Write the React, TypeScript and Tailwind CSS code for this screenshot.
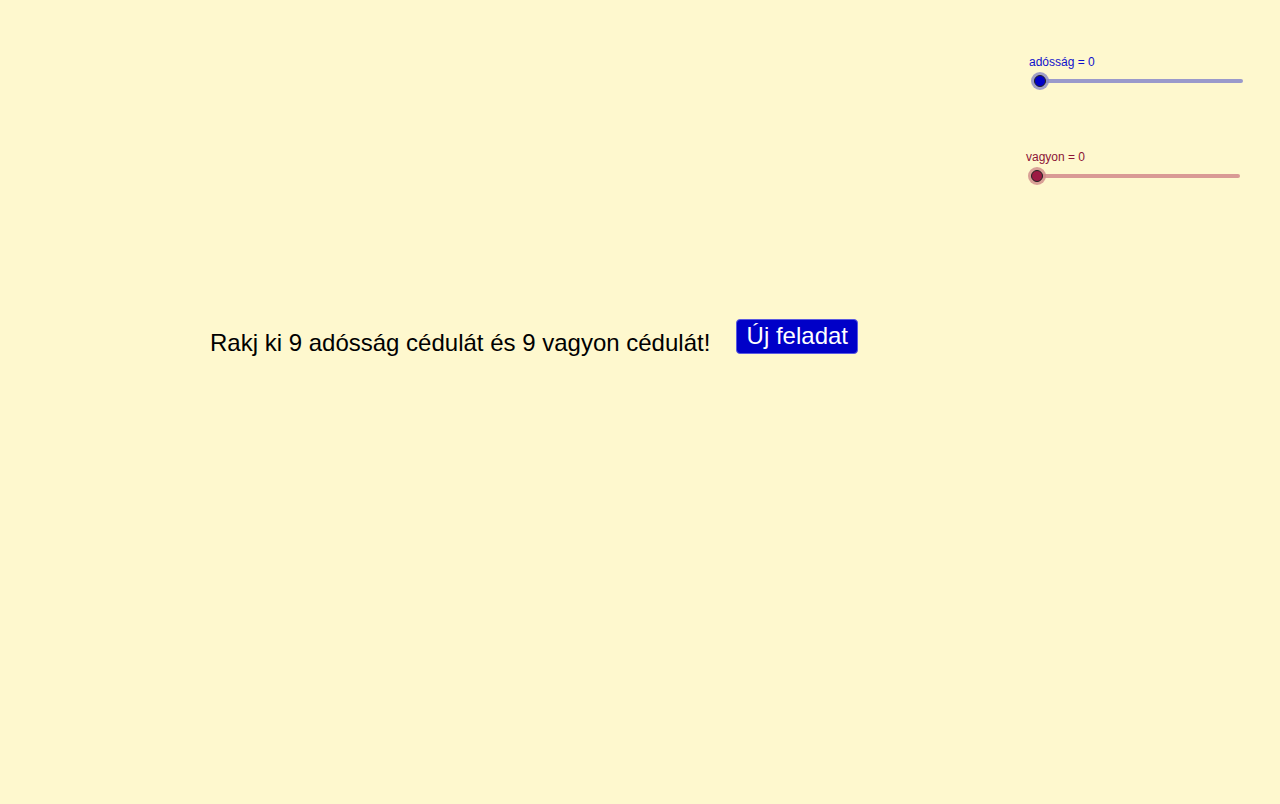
function Slider({
  label,
  labelClass,
  trackClass,
  haloClass,
  knobClass,
}: {
  label: string;
  labelClass: string;
  trackClass: string;
  haloClass: string;
  knobClass: string;
}) {
  return (
    <div className="flex flex-col">
      <span className={`-ml-[2px] mt-[1px] text-[12px] leading-[14px] ${labelClass}`}>{label}</span>
      <div className="relative mt-[3px] h-[18px] w-[221px]">
        <div className={`absolute left-[9px] top-[7px] h-[4px] w-[203px] rounded-full ${trackClass}`} />
        <div className={`absolute left-0 top-0 size-[18px] rounded-full ${haloClass}`} />
        <div className={`absolute left-[3px] top-[3px] size-[12px] rounded-full border border-[#222] ${knobClass}`} />
      </div>
    </div>
  );
}

export default function App() {
  return (
    <div
      className="relative h-[804px] w-[1280px] overflow-hidden bg-[#fef8ce]"
      style={{ fontFamily: '"Liberation Sans", Arial, sans-serif' }}
    >
      {/* slider widgets on the canvas */}
      <div className="absolute left-[1031px] top-[54px]">
        <Slider
          label="adósság = 0"
          labelClass="text-[#1010cc]"
          trackClass="bg-[#9a9acb]"
          haloClass="bg-[#8888c4]/80"
          knobClass="bg-[#0000c8]"
        />
      </div>
      <div className="absolute left-[1028px] top-[149px]">
        <Slider
          label="vagyon = 0"
          labelClass="text-[#8c1436]"
          trackClass="bg-[#d99a95]"
          haloClass="bg-[#d08a88]/80"
          knobClass="bg-[#9c1a44]"
        />
      </div>

      <div className="absolute left-[210px] top-[319px] flex items-center">
        <span className="mt-[6px] text-[24px] leading-[36px] text-black">
          Rakj ki 9 adósság cédulát és 9 vagyon cédulát!
        </span>
        <button className="ml-[26px] -mt-[8px] h-[35px] w-[122px] rounded-[4px] border border-[#5a5ae0] bg-[#0000c8] text-[24px] leading-[30px] text-white">
          Új feladat
        </button>
      </div>
    </div>
  );
}
